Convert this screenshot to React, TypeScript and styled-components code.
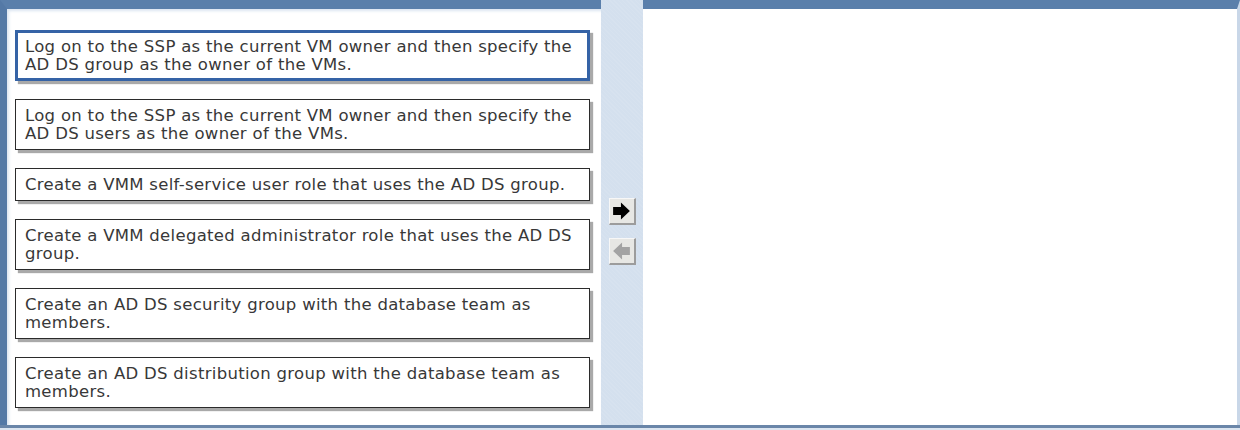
import styled, { createGlobalStyle, css } from 'styled-components';

const GlobalStyle = createGlobalStyle`
    html, body {
        margin: 0;
        padding: 0;
        background: #ffffff;
    }
`;

const Frame = styled.div`
    width: 1240px;
    height: 430px;
    display: flex;
    flex-direction: column;
    font-family: "DejaVu Sans", Verdana, sans-serif;
    overflow: hidden;
`;

const Columns = styled.div`
    flex: 1;
    display: grid;
    grid-template-columns: 601px 42px 1fr;
    min-height: 0;
`;

const SourcePanel = styled.div`
    border-top: 9px solid #5a7fab;
    border-left: 7px solid #5479a6;
    background: #ffffff;
    box-shadow: inset 2px 2px 3px #dbe5f1;
    padding: 21px 0 0 8px;
    display: flex;
    flex-direction: column;
    gap: 18px;
`;

const TargetPanel = styled.div`
    border-top: 9px solid #5a7fab;
    border-right: 3px solid #c9d7e8;
    background: #ffffff;
`;

const Rail = styled.div`
    background-color: #d4e0ee;
    background-image: repeating-linear-gradient(
        45deg,
        rgba(255, 255, 255, 0.07) 0 1px,
        transparent 1px 3px
    );
    display: flex;
    flex-direction: column;
    align-items: center;
    padding-top: 198px;
    gap: 13px;
`;

const BottomEdge = styled.div`
    height: 3px;
    background: #6a86a9;
    border-bottom: 2px solid #dce5f0;
`;

const Choice = styled.div<{ $selected?: boolean }>`
    width: 575px;
    box-sizing: border-box;
    background: #ffffff;
    border: 1px solid #2b2b2b;
    box-shadow: 3px 3px 1px #a9a9a9;
    padding: 7px 9px 6px 9px;
    font-size: 16.5px;
    letter-spacing: 0.3px;
    line-height: 18px;
    color: #383838;
    ${({ $selected }) => $selected && css`
        border-color: #3563a6;
        box-shadow: inset 0 0 0 2px #3563a6, 3px 3px 1px #a9a9a9;
    `}
`;

const MoveButton = styled.button`
    width: 27px;
    height: 27px;
    padding: 0;
    margin: 0;
    display: flex;
    align-items: center;
    justify-content: center;
    background: #e7e7e4;
    border-style: solid;
    border-width: 1px 2px 2px 1px;
    border-color: #f7f7f7 #9c9c9c #9c9c9c #f7f7f7;
    cursor: default;
`;

const choices = [
    { text: 'Log on to the SSP as the current VM owner and then specify the AD DS group as the owner of the VMs.', selected: true },
    { text: 'Log on to the SSP as the current VM owner and then specify the AD DS users as the owner of the VMs.' },
    { text: 'Create a VMM self-service user role that uses the AD DS group.' },
    { text: 'Create a VMM delegated administrator role that uses the AD DS group.' },
    { text: 'Create an AD DS security group with the database team as members.' },
    { text: 'Create an AD DS distribution group with the database team as members.' },
];

const BlockArrow = ({ left, color }: { left?: boolean; color: string }) => (
    <svg width="19" height="18" viewBox="0 0 17 16" style={left ? { transform: 'scaleX(-1)' } : undefined}>
        <path d="M1 4.5 H8 V0.5 L16 8 L8 15.5 V11.5 H1 Z" fill={color} />
    </svg>
);

const App = () => {
    return (
        <Frame>
            <GlobalStyle />
            <Columns>
                <SourcePanel>
                    {choices.map((c) => (
                        <Choice key={c.text} $selected={c.selected}>{c.text}</Choice>
                    ))}
                </SourcePanel>
                <Rail>
                    <MoveButton aria-label="Move right">
                        <BlockArrow color="#000000" />
                    </MoveButton>
                    <MoveButton aria-label="Move left" disabled>
                        <BlockArrow left color="#a3a3a3" />
                    </MoveButton>
                </Rail>
                <TargetPanel />
            </Columns>
            <BottomEdge />
        </Frame>
    );
};

export default App;
